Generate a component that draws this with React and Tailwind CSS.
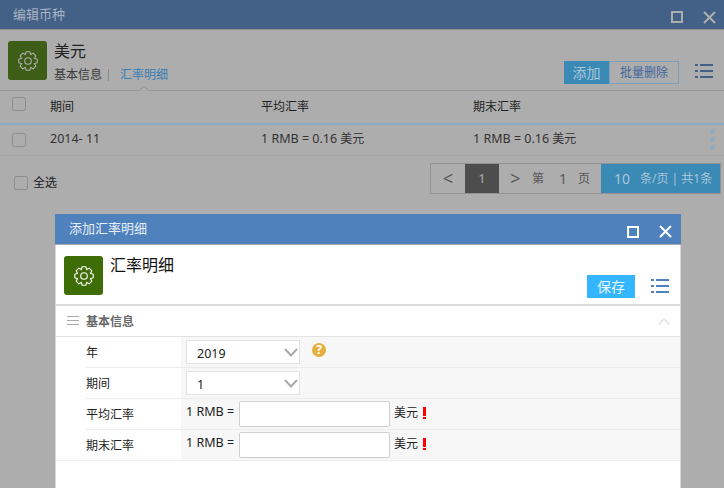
import React from 'react';

const FONT = { fontFamily: '"Noto Sans", "Noto Sans CJK SC", sans-serif' };

// 8-tooth cog outline, centred on 10,10
const gearPath = () => {
  const pts = [];
  for (let i = 0; i < 8; i++) {
    const a = (i * Math.PI) / 4 - Math.PI / 2;
    const step = Math.PI / 8;
    [[6.9, -step * 1.05], [9.4, -step * 0.5], [9.4, step * 0.5], [6.9, step * 1.05]].forEach(([r, d]) => {
      pts.push(`${(10 + r * Math.cos(a + d)).toFixed(2)} ${(10 + r * Math.sin(a + d)).toFixed(2)}`);
    });
  }
  return `M${pts.join(' L')} Z`;
};

const Gear = ({ color }) => (
  <svg width="20" height="20" viewBox="0 0 20 20" fill="none" stroke={color} strokeWidth="1.1" strokeLinejoin="round">
    <path d={gearPath()} />
    <circle cx="10" cy="10" r="3.3" />
  </svg>
);

const ListIcon = ({ color }) => (
  <svg width="18" height="14" viewBox="0 0 18 14" fill={color}>
    <rect x="0" y="0" width="3" height="2" />
    <rect x="5" y="0" width="13" height="2" />
    <rect x="0" y="6" width="3" height="2" />
    <rect x="5" y="6" width="13" height="2" />
    <rect x="0" y="12" width="3" height="2" />
    <rect x="5" y="12" width="13" height="2" />
  </svg>
);

const WinButtons = ({ square, cross }) => (
  <div className="flex items-center mt-[5px]">
    <div className={`w-[12px] h-[12px] border-2 ${square}`}></div>
    <svg width="13" height="13" viewBox="0 0 13 13" className={`ml-[20px] ${cross}`} stroke="currentColor" strokeWidth="2">
      <path d="M1 1 L12 12 M12 1 L1 12" />
    </svg>
  </div>
);

const Box = ({ className = '' }) => (
  <div className={`w-[14px] h-[14px] rounded-[2px] border border-[#8f8f8f] ${className}`}></div>
);

const Latin = ({ children }) => <span className="text-[12.5px]">{children}</span>;

const Field = ({ label, last, children }) => (
  <div className={`flex h-[31px] ${last ? 'border-b border-[#ececec]' : ''}`}>
    <div className="w-[30px] shrink-0"></div>
    <div className={`flex flex-1 ${last ? '' : 'border-b border-[#ececec]'}`}>
      <div className="w-[95px] shrink-0 pt-[1px] text-[12px] leading-[30px] text-[#222]">{label}</div>
      <div className="flex-1 bg-[#f7f7f7] flex items-center pl-[5px] text-[12px] text-[#222]">{children}</div>
    </div>
  </div>
);

const Select = ({ value }) => (
  <div className="w-[114px] h-[24px] bg-white border border-[#e3e3e3] flex items-center justify-between pl-[10px] pr-[1px] text-[#222]">
    <span className="pt-[5px]"><Latin>{value}</Latin></span>
    <svg width="14" height="9" viewBox="0 0 14 9" fill="none" stroke="#aaa" strokeWidth="2" className="mt-[1px]">
      <path d="M1 1 L7 7.5 L13 1" />
    </svg>
  </div>
);

const RateInput = () => (
  <>
    <span className="-mt-[3px]"><Latin>1 RMB =</Latin></span>
    <div className="ml-[5px] w-[151px] h-[26px] bg-white border border-[#d0d0d0] rounded-[2px]"></div>
    <span className="ml-[4px] -mt-[2px]">美元</span>
    <span className="ml-[5px] -mt-[3px] w-[3px] h-[12px] flex flex-col justify-between">
      <span className="block h-[9px] bg-[#f00]"></span>
      <span className="block h-[2px] bg-[#f00]"></span>
    </span>
  </>
);

export default function App() {
  return (
    <div style={FONT} className="relative w-[724px] h-[488px] overflow-hidden bg-[#adadad]">
      {/* Page behind the dialog */}
      <div className="h-[30px] bg-[#436186] border-b border-[#8f8f8f] flex items-center justify-between pl-[13px] pr-[8px]">
        <span className="text-[13px] text-[#a9b3c0]">编辑币种</span>
        <WinButtons square="border-[#adadad]" cross="text-[#adadad]" />
      </div>

      <div className="h-[61px] border-b border-[#969696] relative flex pl-[8px] pt-[11px]">
        <div className="w-[39px] h-[39px] rounded-[3px] bg-[#3e5d16] flex items-center justify-center">
          <Gear color="#adadad" />
        </div>
        <div className="ml-[7px]">
          <div className="text-[16px] leading-[20px] text-[#222]">美元</div>
          <div className="flex items-center mt-[6px] text-[12px] leading-[16px]">
            <span className="text-[#3a3a3a]">基本信息</span>
            <span className="ml-[6px] w-px h-[12px] bg-[#8a8a8a]"></span>
            <span className="ml-[11px] text-[#3a7db5]">汇率明细</span>
          </div>
        </div>
        <div className="absolute left-[139px] bottom-[-1px] w-[10px] h-[5px] overflow-hidden">
          <div className="w-[8px] h-[8px] mt-[1px] ml-[1px] rotate-45 bg-[#adadad] border-l border-t border-[#969696]"></div>
        </div>
        <div className="ml-auto mr-[45px] mt-[20px] flex h-[23px]">
          <div className="w-[45px] bg-[#3a8ab5] text-[#a9c6d8] text-[14px] flex items-center justify-center">添加</div>
          <div className="w-[70px] border border-[#7d9fbe] text-[#3f67a0] text-[12px] flex items-center justify-center">批量删除</div>
        </div>
        <div className="absolute right-[11px] top-[34px]">
          <ListIcon color="#436186" />
        </div>
      </div>

      <div className="flex h-[34px] items-center border-b-2 border-[#8eaac0] pl-[12px] text-[12px] text-[#222]">
        <Box className="-mt-[6px]" />
        <span className="ml-[24px] w-[211px]">期间</span>
        <span className="w-[212px]">平均汇率</span>
        <span>期末汇率</span>
      </div>
      <div className="flex h-[31px] items-center border-b border-[#a3a3a3] pl-[12px] text-[12px] text-[#333] relative">
        <Box className="-mt-[1px]" />
        <span className="ml-[24px] w-[211px] -mt-[1px]"><Latin>2014- 11</Latin></span>
        <span className="w-[212px] -mt-[1px]"><Latin>1 RMB = 0.16 </Latin>美元</span>
        <span className="-mt-[1px]"><Latin>1 RMB = 0.16 </Latin>美元</span>
        <div className="absolute right-[9px] top-[4px] flex flex-col gap-[3px]">
          <span className="w-[5px] h-[5px] rounded-full bg-[#8eaac0]"></span>
          <span className="w-[5px] h-[5px] rounded-full bg-[#8eaac0]"></span>
          <span className="w-[5px] h-[5px] rounded-full bg-[#8eaac0]"></span>
        </div>
      </div>

      <div className="flex items-start justify-between pl-[14px] pr-[3px] pt-[7px]">
        <div className="flex items-center mt-[10px] text-[12px] text-[#222]">
          <Box />
          <span className="ml-[5px] pt-[1px]">全选</span>
        </div>
        <div className="flex w-[291px] h-[31px] border border-[#929292] text-[#555] text-[13px]">
          <div className="w-[34px] flex items-center justify-center text-[18px]">&lt;</div>
          <div className="w-[34px] bg-[#4d4d4d] text-[#adadad] flex items-center justify-center">1</div>
          <div className="w-[33px] flex items-center justify-center text-[18px]">&gt;</div>
          <span className="self-center text-[12px] w-[27px]">第</span>
          <span className="self-center text-[14px] w-[19px]">1</span>
          <span className="self-center text-[12px] w-[23px]">页</span>
          <div className="flex-1 bg-[#3a8ab5] text-[#a9c6d8] flex items-center pl-[13px]">
            <span className="text-[14px]">10</span>
            <span className="ml-[10px] text-[12px]">条/页 | 共1条</span>
          </div>
        </div>
      </div>

      {/* Dialog */}
      <div className="absolute left-[55px] top-[214px] w-[626px] h-[274px] bg-white border-r border-l border-[#d8d8d8] flex flex-col">
        <div className="h-[31px] -mx-px bg-[#4f81bd] border-b border-[#adadad] flex items-center justify-between pl-[14px] pr-[9px]">
          <span className="text-[13px] text-[#e6eef7]">添加汇率明细</span>
          <WinButtons square="border-white" cross="text-white" />
        </div>

        <div className="h-[61px] border-b-2 border-[#dcdcdc] relative flex pl-[8px] pt-[11px]">
          <div className="w-[39px] h-[39px] rounded-[3px] bg-[#3f6d05] flex items-center justify-center">
            <Gear color="#ffffff" />
          </div>
          <div className="ml-[7px] -mt-[1px] text-[16px] leading-[20px] text-[#111]">汇率明细</div>
          <div className="ml-auto mr-[45px] mt-[19px] w-[48px] h-[23px] bg-[#33b5ff] text-[#e8f6ff] text-[14px] flex items-center justify-center">保存</div>
          <div className="absolute right-[11px] top-[34px]">
            <ListIcon color="#4f81bd" />
          </div>
        </div>

        <div className="h-[31px] border-b border-[#e2e2e2] flex items-center pl-[11px] pr-[10px]">
          <svg width="12" height="10" viewBox="0 0 12 10" fill="#aaa">
            <rect y="0" width="12" height="1" />
            <rect y="4" width="12" height="1" />
            <rect y="8" width="12" height="1" />
          </svg>
          <span className="ml-[7px] pt-[1px] text-[12px] font-bold text-[#666]">基本信息</span>
          <svg width="12" height="7" viewBox="0 0 12 7" fill="none" stroke="#ddd" strokeWidth="1.4" className="ml-auto">
            <path d="M0.5 6.5 L6 1 L11.5 6.5" />
          </svg>
        </div>

        <Field label="年">
          <Select value="2019" />
          <div className="ml-[12px] -mt-[4px] w-[14px] h-[14px] rounded-full bg-[#e6b040] text-white text-[12px] font-bold leading-[14px] text-center">?</div>
        </Field>
        <Field label="期间">
          <Select value="1" />
        </Field>
        <Field label="平均汇率">
          <RateInput />
        </Field>
        <Field label="期末汇率" last>
          <RateInput />
        </Field>
      </div>
    </div>
  );
}
